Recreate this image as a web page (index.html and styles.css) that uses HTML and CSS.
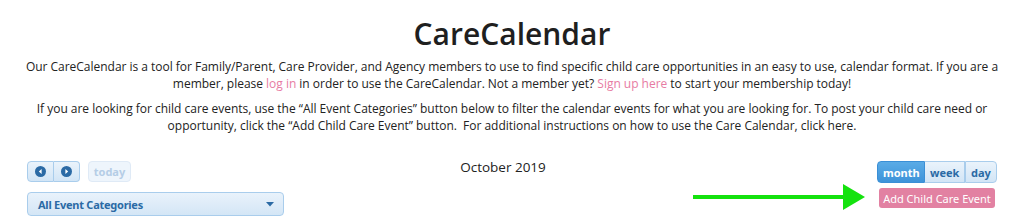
FILE: index.html
```html
<!DOCTYPE html>
<html>
<head>
<meta charset="utf-8">
<link rel="stylesheet" href="styles.css">
</head>
<body>
<div class="page">
  <h1 class="title">CareCalendar</h1>
  <p class="intro"><span>Our CareCalendar is a tool for Family/Parent, Care Provider, and Agency members to use to find specific child care opportunities in an easy to use, calendar format. If you are a</span> <span>member, please</span> <a class="pink" href="#">log in</a> <span>in order to use the CareCalendar. Not a member yet?</span> <a class="pink" href="#">Sign up here</a> <span>to start your membership today!</span></p>
  <p class="intro">If you are looking for child care events, use the “All Event Categories” button below to filter the calendar events for what you are looking for. To post your child care need or opportunity, click the “Add Child Care Event” button.&nbsp; For additional instructions on how to use the Care Calendar, click here.</p>

  <div class="toolbar">
    <div class="left">
      <div class="row">
        <div class="group">
          <button class="btn icon-btn first"><svg width="11" height="11" viewBox="0 0 11 11"><circle cx="5.5" cy="5.5" r="5.5" fill="#2b6aa5"/><path d="M6.6 3 L3.8 5.5 L6.6 8 Z" fill="#fff"/></svg></button>
          <button class="btn icon-btn last"><svg width="11" height="11" viewBox="0 0 11 11"><circle cx="5.5" cy="5.5" r="5.5" fill="#2b6aa5"/><path d="M4.4 3 L7.2 5.5 L4.4 8 Z" fill="#fff"/></svg></button>
        </div>
        <button class="btn today">today</button>
      </div>
      <div class="select">
        <span>All Event Categories</span>
        <svg width="8" height="5" viewBox="0 0 8 5"><path d="M0 0 H8 L4 4.5 Z" fill="#2b6aa5"/></svg>
      </div>
    </div>
    <div class="center">October 2019</div>
    <div class="right">
      <div class="group views">
        <button class="btn view active first">month</button>
        <button class="btn view">week</button>
        <button class="btn view last">day</button>
      </div>
      <button class="add">Add Child Care Event</button>
      <svg class="arrow" width="172" height="26" viewBox="0 0 172 26"><rect x="0" y="11" width="152" height="4" fill="#14e20e"/><path d="M150 0 L172 13 L150 26 Z" fill="#14e20e"/></svg>
    </div>
  </div>
</div>
</body>
</html>
```

FILE: styles.css
```css
html, body {
  margin: 0;
  padding: 0;
  background: #fff;
}
body {
  font-family: "Open Sans", "Noto Sans", sans-serif;
  color: #222;
}
.page {
  padding: 0 27px;
}
.title {
  margin: 15px 0 5px;
  font-size: 30px;
  font-weight: 600;
  line-height: 38px;
  text-align: center;
  color: #1f1f1f;
}
.intro {
  margin: 0 -3px 8px;
  font-size: 12px;
  line-height: 17px;
  text-align: center;
  letter-spacing: -0.02px;
}
.pink {
  color: #e77ca3;
  text-decoration: none;
}
.toolbar {
  display: grid;
  grid-template-columns: 1fr auto 1fr;
  margin-top: 27px;
  position: relative;
}
.left {
  display: flex;
  flex-direction: column;
  align-items: flex-start;
  gap: 10px;
}
.row {
  display: flex;
  gap: 8px;
}
.group {
  display: flex;
}
.btn {
  font-family: "Noto Sans", "Open Sans", sans-serif;
  height: 21px;
  border: 1px solid #a9cdec;
  background: linear-gradient(#eaf3fb, #d2e5f6);
  color: #2b6aa5;
  font-weight: bold;
  font-size: 11px;
  padding: 0;
  margin: 0;
  border-radius: 0;
}
.first { border-radius: 4px 0 0 4px; }
.last { border-radius: 0 4px 4px 0; border-left: 0; }
.icon-btn {
  width: 27px;
  display: flex;
  align-items: center;
  justify-content: center;
}
.icon-btn.first { width: 27px; }
.icon-btn.last { width: 26px; }
.today {
  width: 43px;
  border-radius: 4px;
  border-color: #dfeaf6;
  background: #eef5fc;
  color: #b5cde6;
}
.select {
  box-sizing: border-box;
  width: 257px;
  height: 24px;
  border: 1px solid #a9cdec;
  border-radius: 4px;
  background: linear-gradient(#e9f2fb, #d4e6f6);
  display: flex;
  align-items: center;
  justify-content: space-between;
  padding: 0 9px 0 10px;
  font-family: "Noto Sans", "Open Sans", sans-serif;
  font-weight: bold;
  font-size: 11px;
  letter-spacing: -0.25px;
  color: #2b6aa5;
}
.center {
  font-size: 13.5px;
  line-height: 18px;
  margin-top: -3px;
  margin-right: 18px;
  color: #222;
}
.right {
  display: flex;
  flex-direction: column;
  align-items: flex-end;
  gap: 5px;
  position: relative;
}
.views .btn {
  height: 22px;
}
.view {
  padding: 0 5px;
}
.views .first { width: 48px; }
.views .btn:nth-child(2) { width: 40px; border-left: 0; }
.views .last { width: 32px; border-left: 1px solid #a9cdec; }
.view.active {
  background: linear-gradient(#5aabe6, #3d93d9);
  border-color: #3a8fd6;
  color: #fff;
}
.add {
  font-family: "Noto Sans", "Open Sans", sans-serif;
  margin-right: 2px;
  width: 116px;
  height: 20px;
  border: 0;
  border-radius: 3px;
  background: #e281a2;
  color: #fff;
  font-size: 11px;
  padding: 0;
  white-space: nowrap;
}
.arrow {
  position: absolute;
  right: 132px;
  top: 23px;
}
```
